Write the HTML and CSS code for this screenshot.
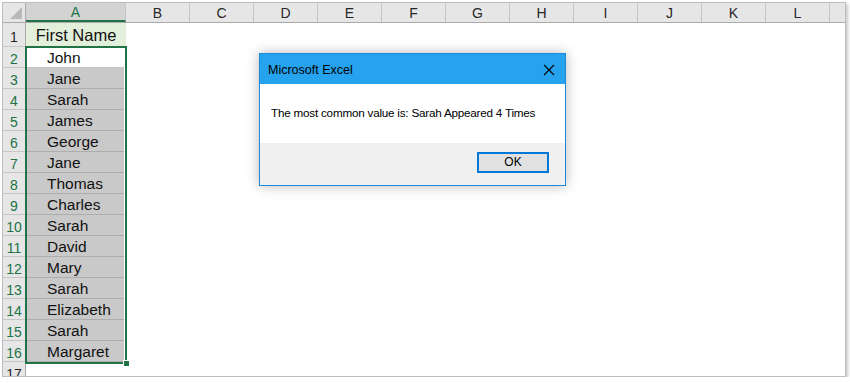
FILE: index.html
```html
<!DOCTYPE html>
<html lang="en">
<head>
  <meta charset="utf-8" />
  <title>Microsoft Excel</title>
  <link rel="stylesheet" href="styles.css">
</head>
<body>
  <div class="sheet">
    <div class="row head-row">
      <div class="corner"><span class="corner-mark"></span></div>
      <div class="col-head col-a active">A</div>
      <div class="col-head">B</div>
      <div class="col-head">C</div>
      <div class="col-head">D</div>
      <div class="col-head">E</div>
      <div class="col-head">F</div>
      <div class="col-head">G</div>
      <div class="col-head">H</div>
      <div class="col-head">I</div>
      <div class="col-head">J</div>
      <div class="col-head">K</div>
      <div class="col-head">L</div>
      <div class="col-head rest"></div>
    </div>

    <div class="row title-row">
      <div class="row-head">1</div>
      <div class="cell cell-title">First Name</div>
    </div>
    <div class="row"><div class="row-head sel">2</div><div class="cell current">John</div></div>
    <div class="row"><div class="row-head sel">3</div><div class="cell picked">Jane</div></div>
    <div class="row"><div class="row-head sel">4</div><div class="cell picked">Sarah</div></div>
    <div class="row"><div class="row-head sel">5</div><div class="cell picked">James</div></div>
    <div class="row"><div class="row-head sel">6</div><div class="cell picked">George</div></div>
    <div class="row"><div class="row-head sel">7</div><div class="cell picked">Jane</div></div>
    <div class="row"><div class="row-head sel">8</div><div class="cell picked">Thomas</div></div>
    <div class="row"><div class="row-head sel">9</div><div class="cell picked">Charles</div></div>
    <div class="row"><div class="row-head sel">10</div><div class="cell picked">Sarah</div></div>
    <div class="row"><div class="row-head sel">11</div><div class="cell picked">David</div></div>
    <div class="row"><div class="row-head sel">12</div><div class="cell picked">Mary</div></div>
    <div class="row"><div class="row-head sel">13</div><div class="cell picked">Sarah</div></div>
    <div class="row"><div class="row-head sel">14</div><div class="cell picked">Elizabeth</div></div>
    <div class="row"><div class="row-head sel">15</div><div class="cell picked">Sarah</div></div>
    <div class="row"><div class="row-head sel">16</div><div class="cell picked">Margaret</div></div>
    <div class="row"><div class="row-head">17</div><div class="cell"></div></div>

    <div class="selection"><span class="fill-handle"></span></div>
  </div>

  <div class="msgbox">
    <div class="msgbox-title">
      <span>Microsoft Excel</span>
      <svg class="msgbox-close" width="12" height="12" viewBox="0 0 12 12">
        <path d="M1 1 L11 11 M11 1 L1 11" stroke="#000" stroke-width="1.1" fill="none" />
      </svg>
    </div>
    <div class="msgbox-body">The most common value is: Sarah Appeared 4 Times</div>
    <div class="msgbox-foot">
      <div class="msgbox-button">OK</div>
    </div>
  </div>
</body>
</html>
```

FILE: styles.css
```css
*, *::before, *::after {
  box-sizing: border-box;
}

body {
  margin: 0;
  background: white;
  font-family: "Liberation Sans", Arial, sans-serif;
  overflow: hidden;
}

.sheet {
  position: relative;
  margin: 2px 0 0 2px;
  width: 844px;
  height: 375px;
  border: 1px solid #bdbdbd;
  box-shadow: 2px 2px 3px rgba(0, 0, 0, 0.22);
  background: white;
  overflow: hidden;
}

.row {
  display: flex;
  height: 21px;
}

.head-row {
  height: 20px;
  background: #e6e6e6;
  border-bottom: 1px solid #ababab;
}

.title-row {
  height: 24px;
}

.corner {
  position: relative;
  width: 23px;
  border-right: 1px solid #ababab;
}

.corner-mark {
  position: absolute;
  right: 3px;
  bottom: 3px;
  width: 0;
  height: 0;
  border-left: 12px solid transparent;
  border-bottom: 12px solid #b9b9b9;
}

.col-head {
  width: 64px;
  flex: none;
  border-right: 1px solid #c6c6c6;
  font-size: 14px;
  line-height: 20px;
  text-align: center;
  color: #262626;
}

.col-head.col-a {
  width: 100px;
}

.col-head.active {
  background: #d3d3d3;
  color: #217346;
  border-bottom: 2px solid #217346;
  line-height: 19px;
}

.col-head.rest {
  flex: 1;
  border-right: none;
}

.row-head {
  width: 23px;
  flex: none;
  background: #e6e6e6;
  border-right: 1px solid #ababab;
  border-bottom: 1px solid #c6c6c6;
  font-size: 14px;
  line-height: 24px;
  text-align: center;
  color: #262626;
}

.title-row .row-head {
  line-height: 28px;
}

.row-head.sel {
  color: #217346;
}

.cell {
  width: 100px;
  flex: none;
  font-size: 15.5px;
  line-height: 22px;
  padding-left: 21px;
  color: #111;
}

.cell-title {
  background: #e2efda;
  padding-left: 0;
  text-align: center;
  font-size: 16.5px;
  line-height: 25px;
}

.cell.current {
  background: white;
  border-bottom: 1px solid #c6c6c6;
}

.cell.picked {
  background: #c9c9c9;
  border-bottom: 1px solid #adadad;
}

.selection {
  position: absolute;
  left: 22px;
  top: 43px;
  width: 102px;
  height: 318px;
  border: 2px solid #217346;
  box-shadow: inset -1px 0 0 white;
  pointer-events: none;
}

.fill-handle {
  position: absolute;
  right: -4px;
  bottom: -4px;
  width: 6px;
  height: 6px;
  background: #217346;
  border-left: 1px solid white;
  border-top: 1px solid white;
}

.msgbox {
  position: absolute;
  left: 259px;
  top: 53px;
  width: 307px;
  height: 133px;
  display: flex;
  flex-direction: column;
  border: 1px solid #1a8ad9;
  background: white;
  box-shadow: 0 0 12px rgba(0, 0, 0, 0.28);
  font-size: 12px;
  color: #000;
}

.msgbox-title {
  height: 30px;
  display: flex;
  align-items: center;
  justify-content: space-between;
  padding: 1px 10px 0 8px;
  background: #25a3ef;
  font-size: 12.5px;
}

.msgbox-body {
  height: 59px;
  padding: 22px 0 0 11px;
  font-size: 11.7px;
  letter-spacing: -0.22px;
}

.msgbox-foot {
  flex: 1;
  display: flex;
  justify-content: flex-end;
  align-items: flex-start;
  padding: 9px 16px 0 0;
  background: #f0f0f0;
}

.msgbox-button {
  width: 72px;
  height: 21px;
  border: 2px solid #0078d7;
  background: #e1e1e1;
  font-size: 12px;
  line-height: 17px;
  text-align: center;
}
```
